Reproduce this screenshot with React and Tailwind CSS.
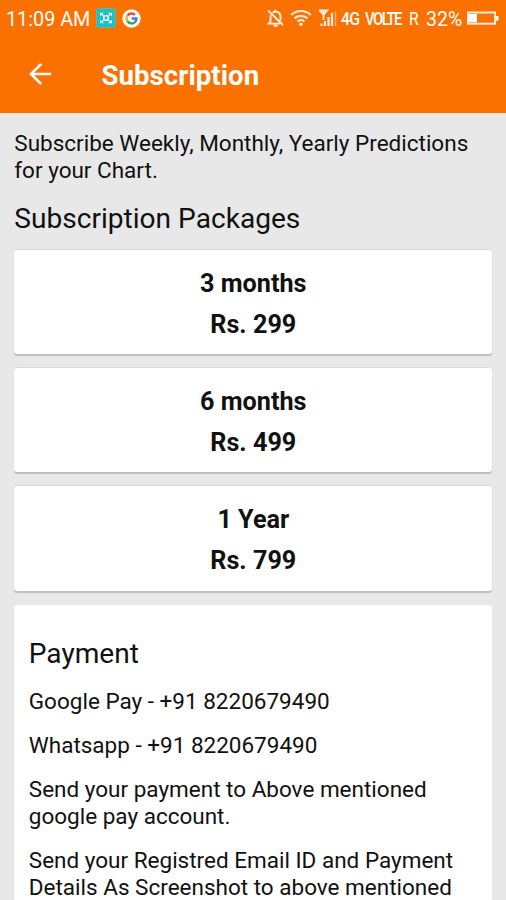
import React from 'react';

const packages = [
  { name: '3 months', price: 'Rs. 299' },
  { name: '6 months', price: 'Rs. 499' },
  { name: '1 Year', price: 'Rs. 799' },
];

function StatusBar() {
  return (
    <div className="flex h-9 items-center pl-[6px] pr-[5px] text-[19.8px] leading-9 whitespace-nowrap">
      <span className="w-[90px] pt-[3px]">11:09 AM</span>
      <svg className="h-5 w-5" viewBox="0 0 20 20" fill="none">
        <rect x="0.5" y="0.5" width="19" height="19" rx="2" fill="#20bfc0" stroke="#62b9a0" />
        <path d="M4.5 8V5.2H7.5M12.5 5.2h3V8M15.5 12v2.8h-3M7.5 14.8h-3V12M4.5 5.2l4 3.4M15.5 5.2l-4 3.4M4.5 14.8l4-3.4M15.5 14.8l-4-3.4" stroke="#e6ffff" strokeWidth="1.1" />
        <circle cx="10" cy="10" r="2.3" stroke="#fff" strokeWidth="1.3" />
      </svg>
      <svg className="ml-[6px] h-[19px] w-[19px]" viewBox="0 0 19 19" fill="none">
        <circle cx="9.5" cy="9.5" r="9.2" fill="#fff" />
        <path d="M5.4 6.7A5 5 0 0 1 13 5.9" stroke="#e34b3e" strokeWidth="2.4" />
        <path d="M5.4 6.7a5 5 0 0 0 0 5.6" stroke="#f4b73b" strokeWidth="2.4" />
        <path d="M5.4 12.3A5 5 0 0 0 12.7 13.3" stroke="#3c9f57" strokeWidth="2.4" />
        <path d="M9.7 9.5h4.8a5 5 0 0 1-1.8 3.8" stroke="#437cda" strokeWidth="2.4" />
      </svg>
      <svg className="ml-[126px] h-5 w-[17px]" viewBox="0 0 17 20" fill="none" stroke="#ffede0" strokeWidth="1.9">
        <path d="M3.5 7.2V13.5L1.5 15.6h11.5M13.5 12.5V8.5c0-3-2-4.7-5-4.7-1 0-2 .3-2.8.8M8.5 4V1.8M1 2.5l15 14.5M6.5 17.8h4" />
      </svg>
      <svg className="ml-[6px] h-5 w-[22px]" viewBox="0 0 22 20" fill="none" stroke="#ffede0" strokeWidth="2.2">
        <path d="M1.2 7a14 14 0 0 1 19.6 0M4.5 10.4a9.4 9.4 0 0 1 13 0M7.6 13.5a5 5 0 0 1 6.8 0" />
        <circle cx="11" cy="16.2" r="1.8" fill="#ffede0" stroke="none" />
      </svg>
      <svg className="ml-[7px] h-5 w-[18px]" viewBox="0 0 18 20" fill="none" stroke="#ffede0">
        <path d="M.8 2.5h7.4L4.5 6.8ZM4.5 3v9" strokeWidth="1.8" />
        <path d="M2.5 18v-2.5M6 18v-5M9.5 18V9M13 18V5" strokeWidth="2.2" />
        <path d="M16.5 18V3" strokeWidth="1.4" opacity=".55" />
      </svg>
      <span className="ml-[4px] w-[24px] origin-left scale-x-[0.86] pt-[2px] text-[18.5px] font-medium tracking-[-0.8px]">4G</span>
      <span className="w-[44px] origin-left scale-x-[0.8] pt-[2px] text-[18.5px] font-medium tracking-[-1.8px]">VOLTE</span>
      <span className="w-[17px] origin-left scale-x-[0.85] pt-[2px] text-[18.5px]">R</span>
      <span className="w-[40px] pt-[3px] text-[19.5px]">32%</span>
      <svg className="h-4 w-[34px] shrink-0" viewBox="0 0 34 16" fill="none">
        <rect x="2" y="2.5" width="27" height="11.2" stroke="#ffede0" strokeWidth="2" />
        <path d="M3 4h8v8.2H3zM30 6h2.5v4.8H30z" fill="#fff" />
      </svg>
    </div>
  );
}

export default function App() {
  return (
    <div className="h-[900px] overflow-hidden bg-[#e8e8e8] font-['Roboto',sans-serif] text-[#111111]">
      <header className="h-[112.5px] bg-[#fb7100] text-white">
        <StatusBar />
        <div className="flex h-[76px] items-center pl-[28px]">
          <svg className="h-[24px] w-[24px]" viewBox="0 0 24 24" fill="none" stroke="#fff" strokeWidth="2.7">
            <path d="M23.2 12H3M13.2 1.9 3 12l10.2 10.1" />
          </svg>
          <h1 className="ml-[49.5px] pt-[3px] text-[27.6px] font-bold leading-8 tracking-[0.05px]">Subscription</h1>
        </div>
      </header>
      <main className="pl-[14.3px] pr-[13.7px] pt-[17.5px]">
        <p className="text-[22.5px] leading-[27px]">
          Subscribe Weekly, Monthly, Yearly Predictions
          <br />
          for your Chart.
        </p>
        <h2 className="mt-[19px] text-[28.1px] leading-8">Subscription Packages</h2>
        <div className="mt-[15px] flex flex-col gap-[14px]">
          {packages.map((item) => (
            <section
              key={item.name}
              className="h-[104.2px] rounded-[3px] bg-white pt-[12.7px] text-center text-[25.2px] font-bold leading-[41px] shadow-[0_2px_1px_#bdbdbd,0_-1px_1px_#dadada]"
            >
              <p>{item.name}</p>
              <p>{item.price}</p>
            </section>
          ))}
          <section className="h-[320px] rounded-[3px] bg-white px-[14.5px] pt-[33.2px] text-[22.5px] leading-[27px]">
            <h2 className="text-[28.1px] leading-8">Payment</h2>
            <p className="mt-[18px]">Google Pay - +91 8220679490</p>
            <p className="mt-[17px]">Whatsapp - +91 8220679490</p>
            <p className="mt-[17.5px]">
              Send your payment to Above mentioned
              <br />
              google pay account.
            </p>
            <p className="mt-[17px]">
              Send your Registred Email ID and Payment
              <br />
              Details As Screenshot to above mentioned
            </p>
          </section>
        </div>
      </main>
    </div>
  );
}
